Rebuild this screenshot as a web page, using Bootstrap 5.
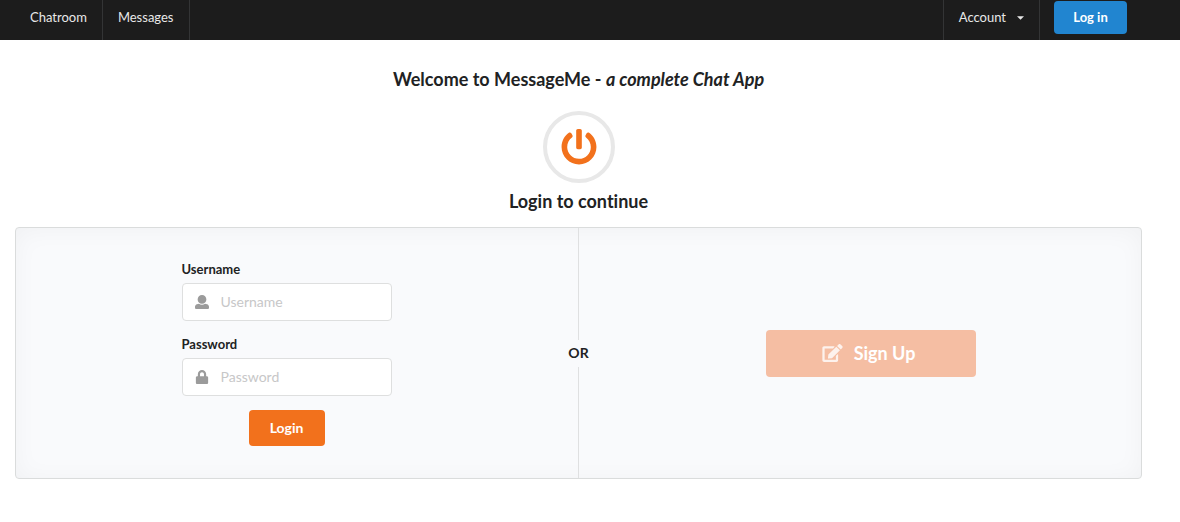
<!DOCTYPE html>
<html lang="en">
<head>
<meta charset="utf-8">
<meta name="viewport" content="width=device-width, initial-scale=1">
<title>MessageMe</title>
<link href="https://cdn.jsdelivr.net/npm/bootstrap@5.3.0/dist/css/bootstrap.min.css" rel="stylesheet">
<style>
  body { font-family: Lato, "Liberation Sans", sans-serif; font-size: 14px; line-height: 18px; color: #212223; font-variant-ligatures: no-common-ligatures; }
  .topbar { background: #1c1c1c; height: 40px; padding: 0 53px 0 15px; font-size: 13px; }
  .topbar-link { color: #e8e8e8; padding: 8px 15px 14px; border: 0 solid #333435; background: none; line-height: 18px; text-decoration: none; }
  .topbar-link:hover { color: #fff; }
  .edge-end { border-right-width: 1px; }
  .edge-both { border-left-width: 1px; border-right-width: 1px; }
  .caret { width: 7px; height: 4px; fill: currentColor; margin: 2px 0 0 11px; }
  .btn-plain { border: 0; border-radius: 4px; color: #fff; font-weight: 700; line-height: 18px; }
  .btn-login-top { background: #2185d0; font-size: 13px; width: 73px; height: 33px; padding: 0 0 1px; margin: 1px 0 0 14px; }
  .btn-login { background: #f2711c; font-size: 14px; width: 76px; height: 36px; padding: 0; }
  .btn-signup { font-size: 18px; width: 210px; height: 47px; padding: 0 4px 0 0; gap: 11px; }
  .btn-signup:disabled { background: #f5bea3; color: #fff; opacity: 1; }
  .btn-plain:hover { color: #fff; filter: brightness(.95); }
  .page { padding: 28px 38px 0 15px; }
  .title { font-size: 18px; line-height: 23px; font-weight: 700; }
  .power-ring { width: 72px; height: 72px; border: 4px solid #e8e8e8; margin: 20px 0 7px; }
  .panel { background: #f9fafc; border: 1px solid #dadcdc; border-radius: 4px; box-shadow: inset 0 2px 25px rgba(34, 38, 30, .04); margin-top: 14px; min-height: 252px; }
  .login-form { width: 210px; padding: 32px 0; }
  .field-label { font-size: 13px; font-weight: 700; line-height: 18px; margin-bottom: 5px; }
  .field-box { background: #fff; border: 1px solid #dedfdf; border-radius: 4px; height: 38px; padding: 0 12px; gap: 12px; margin-bottom: 14px; }
  .field-box:focus-within { border-color: #85b7d9; }
  .field-box input { border: 0; padding: 0; background: transparent; font-size: 14px; line-height: 18px; box-shadow: none !important; }
  .field-box input::placeholder { color: #c7c7c8; }
  .split { width: 43px; }
  .split-line { width: 1px; background: #dfe0e1; }
  .split-text { font-weight: 700; line-height: 25px; padding-bottom: 2px; }
</style>
</head>
<body>
<nav class="topbar d-flex align-items-stretch" aria-label="Main">
  <a class="topbar-link edge-end" href="#">Chatroom</a>
  <a class="topbar-link edge-end" href="#">Messages</a>
  <button type="button" class="topbar-link edge-both ms-auto d-flex align-items-center">Account
    <svg class="caret" viewBox="0 0 8 4" aria-hidden="true"><path d="M0 0h8L4 4z"/></svg>
  </button>
  <button type="button" class="btn btn-plain btn-login-top">Log in</button>
</nav>

<main class="page">
  <header class="d-flex flex-column align-items-center text-center">
    <h1 class="title mb-0">Welcome to MessageMe - <em>a complete Chat App</em></h1>
    <div class="power-ring rounded-circle d-flex align-items-center justify-content-center">
      <svg width="36" height="36" viewBox="0 0 512 512" fill="#f2711c" aria-hidden="true"><path d="M400 54.1c63 45 104 118.6 104 201.9 0 136.8-110.8 247.7-247.5 248C120 504.3 8.2 393 8 256.4 7.9 173.1 48.9 99.3 111.8 54.2c11.7-8.3 28-4.8 35 7.7L162.6 90c5.9 10.5 3.1 23.8-6.6 31-41.5 30.8-68 79.6-68 134.9-.1 92.3 74.5 168.1 168 168.1 91.6 0 168.6-74.2 168-169.1-.3-51.8-24.7-101.8-68.1-134-9.7-7.2-12.4-20.5-6.5-30.9l15.8-28.1c7-12.4 23.2-16.1 34.8-7.8zM296 264V24c0-13.3-10.7-24-24-24h-32c-13.3 0-24 10.7-24 24v240c0 13.3 10.7 24 24 24h32c13.3 0 24-10.7 24-24z"/></svg>
    </div>
    <h2 class="title mb-0">Login to continue</h2>
  </header>

  <section class="panel d-flex align-items-stretch">
    <div class="flex-fill w-50 d-flex align-items-center justify-content-center">
      <form class="login-form">
        <label class="field-label d-block" for="username">Username</label>
        <div class="field-box d-flex align-items-center">
          <svg class="flex-shrink-0" width="14" height="14" viewBox="0 0 512 512" fill="#9b9b9b" aria-hidden="true"><path d="M256 0c88.366 0 160 71.634 160 160s-71.634 160-160 160S96 248.366 96 160 167.634 0 256 0zm183.283 333.821l-71.313-17.828c-74.923 53.89-165.738 41.864-223.94 0l-71.313 17.828C29.981 344.505 0 382.903 0 426.955V464c0 26.51 21.49 48 48 48h416c26.51 0 48-21.49 48-48v-37.045c0-44.052-29.981-82.45-72.717-93.134z"/></svg>
          <input class="form-control" type="text" id="username" placeholder="Username">
        </div>
        <label class="field-label d-block" for="password">Password</label>
        <div class="field-box d-flex align-items-center">
          <svg class="flex-shrink-0" width="14" height="14" viewBox="-32 0 512 512" fill="#9b9b9b" aria-hidden="true"><path d="M400 224h-24v-72C376 68.2 307.8 0 224 0S72 68.2 72 152v72H48c-26.5 0-48 21.5-48 48v192c0 26.5 21.5 48 48 48h352c26.5 0 48-21.5 48-48V272c0-26.5-21.5-48-48-48zm-104 0H152v-72c0-39.7 32.3-72 72-72s72 32.3 72 72v72z"/></svg>
          <input class="form-control" type="password" id="password" placeholder="Password">
        </div>
        <div class="text-center"><button type="submit" class="btn btn-plain btn-login">Login</button></div>
      </form>
    </div>
    <div class="split flex-shrink-0 d-flex flex-column align-items-center">
      <span class="split-line flex-fill"></span>
      <span class="split-text">OR</span>
      <span class="split-line flex-fill"></span>
    </div>
    <div class="flex-fill w-50 d-flex align-items-center justify-content-center">
      <button type="button" class="btn btn-plain btn-signup d-flex align-items-center justify-content-center" disabled>
        <svg width="21" height="18" viewBox="0 0 576 512" fill="#fff" fill-opacity=".8" aria-hidden="true"><path d="M402.6 83.2l90.2 90.2c3.8 3.8 3.8 10 0 13.8L274.4 405.6l-92.8 10.3c-12.4 1.4-22.9-9.1-21.5-21.5l10.3-92.8L388.8 83.2c3.8-3.8 10-3.8 13.8 0zm162-22.9l-48.8-48.8c-15.2-15.2-39.9-15.2-55.2 0l-35.4 35.4c-3.8 3.8-3.8 10 0 13.8l90.2 90.2c3.8 3.8 10 3.8 13.8 0l35.4-35.4c15.2-15.3 15.2-40 0-55.2zM384 346.2V448H64V128h229.8c3.2 0 6.2-1.3 8.5-3.5l40-40c7.6-7.6 2.2-20.5-8.5-20.5H48C21.5 64 0 85.5 0 112v352c0 26.5 21.5 48 48 48h352c26.5 0 48-21.5 48-48V306.2c0-10.7-12.9-16-20.5-8.5l-40 40c-2.2 2.3-3.5 5.3-3.5 8.5z"/></svg>
        Sign Up
      </button>
    </div>
  </section>
</main>
<script src="https://cdn.jsdelivr.net/npm/bootstrap@5.3.0/dist/js/bootstrap.bundle.min.js"></script>
</body>
</html>
